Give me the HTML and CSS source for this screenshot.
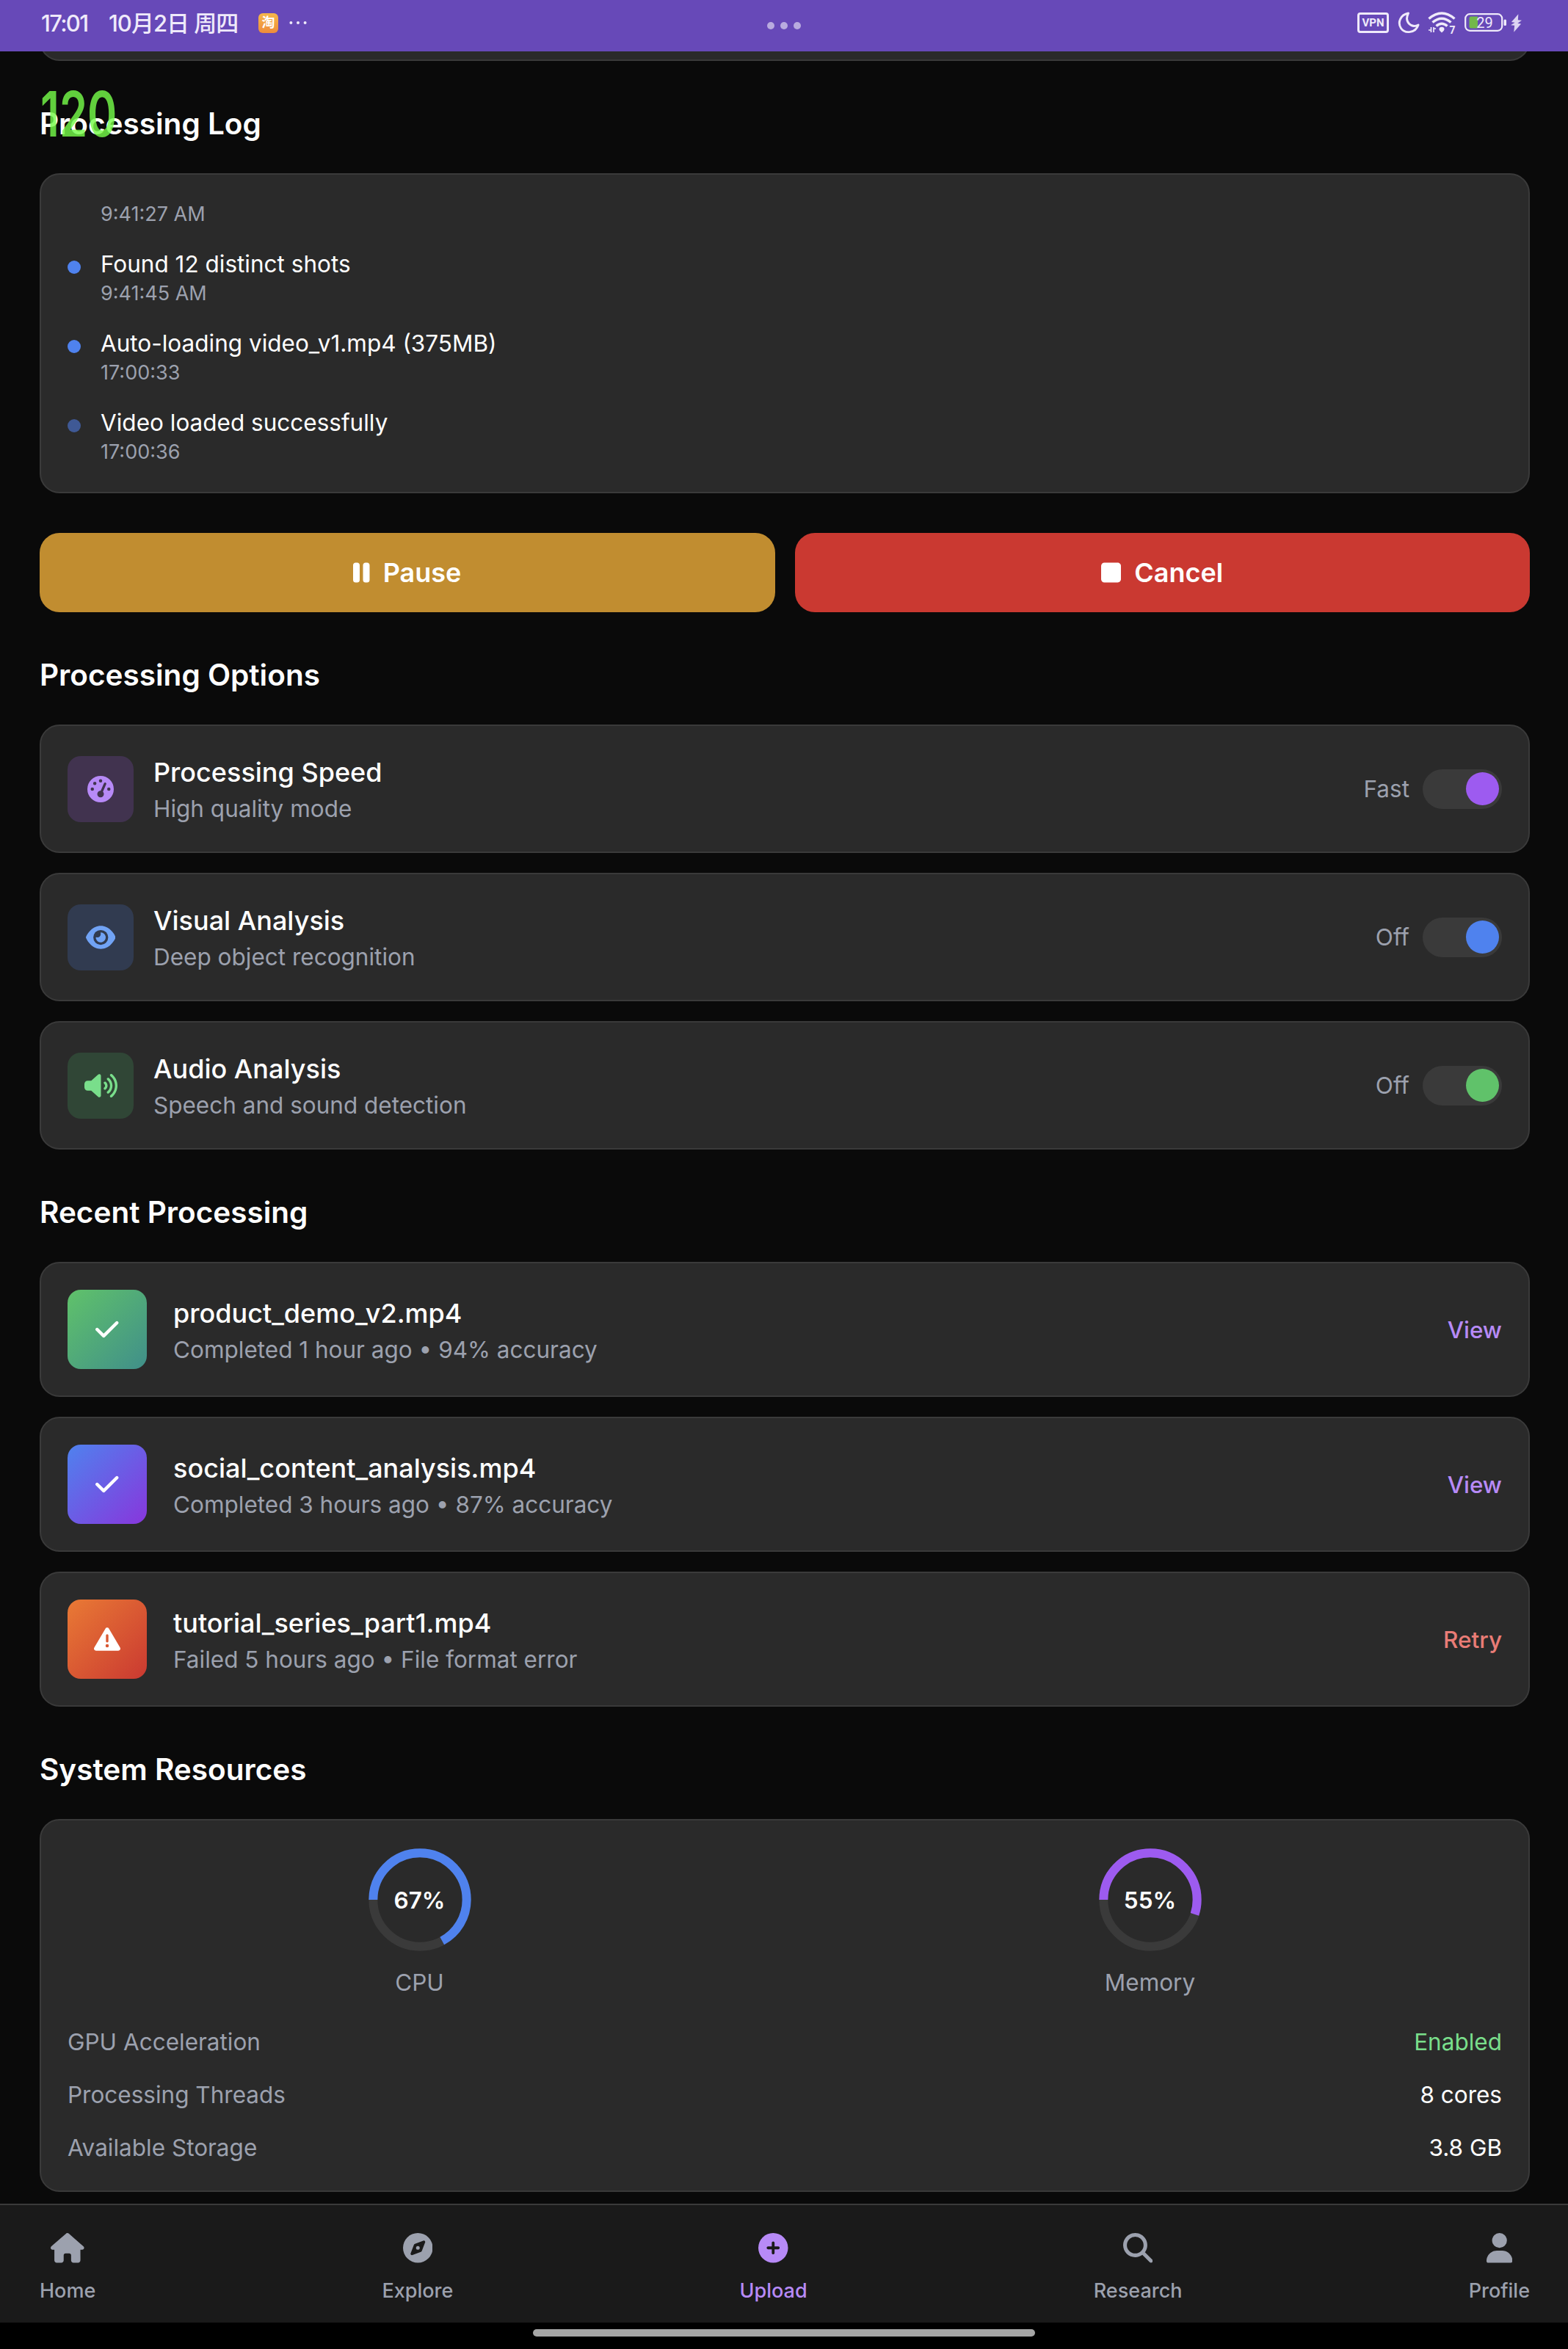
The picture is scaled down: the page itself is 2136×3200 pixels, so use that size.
FILE: index.html
```html
<!DOCTYPE html>
<html lang="en">
<head>
<meta charset="utf-8">
<title>Video Processing</title>
<link rel="stylesheet" href="styles.css">
</head>
<body>
<header class="status">
  <div class="status-left">
    <span class="time">17:01</span>
    <span class="date">10月2日 周四</span>
    <span class="app">淘</span>
    <svg class="more" viewBox="0 0 24 6"><circle cx="2.4" cy="3" r="2"/><circle cx="12" cy="3" r="2"/><circle cx="21.6" cy="3" r="2"/></svg>
  </div>
  <svg class="handle" viewBox="0 0 48 10"><circle cx="6" cy="5" r="5"/><circle cx="24" cy="5" r="5"/><circle cx="42" cy="5" r="5"/></svg>
  <div class="status-right">
    <span class="vpn">VPN</span>
    <svg class="moon" viewBox="0 0 30 30"><path d="M14.5 2C3.500 4-.5 15 4.500 22.500c5.500 8 20 6.500 23.500-4.500C18.500 22.500 8.500 14 14.500 2z" fill="none" stroke="#efeafa" stroke-width="2.900" stroke-linejoin="round"/></svg>
    <svg class="wifi" viewBox="0 0 38 30"><g fill="none" stroke="#efeafa" stroke-width="3.500"><path d="M1.500 9.500Q19-5.500 36.500 9.500"/><path d="M6.500 14.500Q19 4 31.500 14.500"/><path d="M11.500 19.500Q19 13 26.500 19.500"/></g><path d="M15.500 24a3.500 3.300 0 0 1 7 0q0 1.500-3.500 4.500-3.500-3-3.500-4.500z" fill="#efeafa"/><path d="M1 25h3.500v-4M4.500 21v7M8 28v-7M8 23h3" fill="none" stroke="#efeafa" stroke-width="1.700"/><text x="29.500" y="29.500" font-size="14">7</text></svg>
    <svg class="battery" viewBox="0 0 58 26"><rect x="1.200" y="1.200" width="50" height="22.600" rx="6" fill="none" stroke="#efeafa" stroke-width="2.200"/><path d="M9 4.500h9v16H9a2.500 2.500 0 0 1-2.500-2.500V7A2.500 2.500 0 0 1 9 4.500z" fill="#73b84b"/><rect x="53.500" y="8.500" width="3.500" height="8.500" rx="1.500" fill="#efeafa"/><text x="27.500" y="19.500" font-size="20" text-anchor="middle">29</text></svg>
    <svg class="bolt" viewBox="0 0 16 26"><path d="M11 0 1 11.500l5 .8L0 16l5.500.5L4.500 26 15 14l-5-.8L16 9l-5.500-.5z" fill="#ddd5f2"/></svg>
  </div>
</header>

<main class="content">
  <section class="card card-tail"></section>

  <section class="block">
    <h3 class="heading">Processing Log</h3>
    <div class="card log">
      <div class="entry"><span class="when indent">9:41:27 AM</span></div>
      <div class="entry"><i class="dot"></i><div><p class="what">Found 12 distinct shots</p><p class="when">9:41:45 AM</p></div></div>
      <div class="entry"><i class="dot"></i><div><p class="what">Auto-loading video_v1.mp4 (375MB)</p><p class="when">17:00:33</p></div></div>
      <div class="entry"><i class="dot dim"></i><div><p class="what">Video loaded successfully</p><p class="when">17:00:36</p></div></div>
    </div>
  </section>

  <section class="actions">
    <button class="btn pause"><svg viewBox="0 0 320 512" width="22.5" height="36"><path d="M48 64C21.500 64 0 85.500 0 112V400c0 26.500 21.500 48 48 48H80c26.500 0 48-21.500 48-48V112c0-26.500-21.500-48-48-48H48zm192 0c-26.500 0-48 21.500-48 48V400c0 26.500 21.500 48 48 48h32c26.500 0 48-21.500 48-48V112c0-26.500-21.500-48-48-48H240z"/></svg>Pause</button>
    <button class="btn cancel"><svg viewBox="0 0 384 512" width="27" height="36"><path d="M0 128C0 92.700 28.700 64 64 64H320c35.300 0 64 28.700 64 64V384c0 35.300-28.700 64-64 64H64c-35.300 0-64-28.700-64-64V128z"/></svg>Cancel</button>
  </section>

  <section class="block">
    <h3 class="heading">Processing Options</h3>
    <div class="stack">
      <div class="card row">
        <span class="tile purple"><svg viewBox="0 0 512 512" width="36" height="36"><path d="M0 256a256 256 0 1 1 512 0A256 256 0 1 1 0 256zM288 96a32 32 0 1 0-64 0 32 32 0 1 0 64 0zM256 416c35.300 0 64-28.700 64-64c0-17.400-6.900-33.100-18.100-44.600L366 161.700c5.300-12.100-.2-26.300-12.300-31.600s-26.300 .2-31.600 12.300L257.900 288c-.6 0-1.300 0-1.900 0c-35.300 0-64 28.700-64 64s28.700 64 64 64zM176 144a32 32 0 1 0-64 0 32 32 0 1 0 64 0zM96 288a32 32 0 1 0 0-64 32 32 0 1 0 0 64zm352-32a32 32 0 1 0-64 0 32 32 0 1 0 64 0z"/></svg></span>
        <div class="info"><p class="name">Processing Speed</p><p class="sub">High quality mode</p></div>
        <span class="state">Fast</span><span class="toggle"><i class="knob k-purple"></i></span>
      </div>
      <div class="card row">
        <span class="tile blue"><svg viewBox="0 0 576 512" width="40.5" height="36"><path d="M288 32c-80.800 0-145.500 36.800-192.600 80.600C48.600 156 17.300 208 2.500 243.700c-3.300 7.900-3.300 16.700 0 24.600C17.300 304 48.600 356 95.400 399.400C142.500 443.200 207.200 480 288 480s145.500-36.800 192.600-80.600c46.800-43.500 78.100-95.400 93-131.100c3.300-7.900 3.300-16.700 0-24.600c-14.900-35.700-46.200-87.700-93-131.100C433.500 68.800 368.800 32 288 32zM144 256a144 144 0 1 1 288 0 144 144 0 1 1-288 0zm144-64c0 35.300-28.700 64-64 64c-7.100 0-13.900-1.200-20.300-3.300c-5.500-1.800-11.900 1.600-11.700 7.400c.3 6.900 1.300 13.800 3.200 20.700c13.700 51.200 66.400 81.600 117.600 67.900s81.600-66.400 67.900-117.600c-11.100-41.500-47.800-69.400-88.600-71.100c-5.800-.2-9.200 6.100-7.400 11.700c2.100 6.400 3.300 13.200 3.300 20.300z"/></svg></span>
        <div class="info"><p class="name">Visual Analysis</p><p class="sub">Deep object recognition</p></div>
        <span class="state">Off</span><span class="toggle"><i class="knob k-blue"></i></span>
      </div>
      <div class="card row">
        <span class="tile green"><svg viewBox="0 0 640 512" width="45" height="36"><path d="M533.600 32.500C598.500 85.200 640 165.800 640 256s-41.500 170.700-106.400 223.500c-10.300 8.400-25.400 6.800-33.800-3.500s-6.800-25.400 3.500-33.800C557.500 398.200 592 331.200 592 256s-34.500-142.200-88.700-186.300c-10.300-8.400-11.800-23.500-3.500-33.800s23.500-11.800 33.800-3.500zM473.100 107c43.200 35.200 70.900 88.900 70.900 149s-27.700 113.800-70.900 149c-10.300 8.400-25.400 6.800-33.800-3.500s-6.800-25.400 3.500-33.800C475.300 341.300 496 301.100 496 256s-20.700-85.300-53.200-111.800c-10.300-8.400-11.800-23.500-3.500-33.800s23.500-11.800 33.800-3.500zm-60.500 74.500C434.100 199.100 448 225.900 448 256s-13.900 56.900-35.400 74.500c-10.300 8.400-25.400 6.800-33.800-3.500s-6.800-25.400 3.500-33.800C393.100 284.400 400 271 400 256s-6.900-28.400-17.700-37.300c-10.300-8.400-11.800-23.500-3.500-33.800s23.500-11.800 33.800-3.500zM301.100 34.800C312.600 40 320 51.400 320 64V448c0 12.600-7.400 24-18.900 29.200s-25 3.100-34.400-5.300L131.800 352H64c-35.300 0-64-28.700-64-64V224c0-35.300 28.700-64 64-64h67.800L266.700 40.100c9.400-8.400 22.900-10.400 34.400-5.300z"/></svg></span>
        <div class="info"><p class="name">Audio Analysis</p><p class="sub">Speech and sound detection</p></div>
        <span class="state">Off</span><span class="toggle"><i class="knob k-green"></i></span>
      </div>
    </div>
  </section>

  <section class="block">
    <h3 class="heading">Recent Processing</h3>
    <div class="stack">
      <div class="card row">
        <span class="thumb t-green"><svg viewBox="0 0 448 512" width="31.5" height="36"><path d="M438.600 105.400c12.500 12.500 12.500 32.800 0 45.300l-256 256c-12.500 12.500-32.800 12.500-45.300 0l-128-128c-12.500-12.500-12.500-32.800 0-45.300s32.800-12.500 45.300 0L160 338.700 393.400 105.400c12.500-12.500 32.800-12.500 45.300 0z"/></svg></span>
        <div class="info"><p class="name">product_demo_v2.mp4</p><p class="sub">Completed 1 hour ago • 94% accuracy</p></div>
        <span class="link">View</span>
      </div>
      <div class="card row">
        <span class="thumb t-blue"><svg viewBox="0 0 448 512" width="31.5" height="36"><path d="M438.600 105.400c12.500 12.500 12.500 32.800 0 45.300l-256 256c-12.500 12.500-32.800 12.500-45.300 0l-128-128c-12.500-12.500-12.500-32.800 0-45.300s32.800-12.500 45.300 0L160 338.700 393.400 105.400c12.500-12.500 32.800-12.500 45.300 0z"/></svg></span>
        <div class="info"><p class="name">social_content_analysis.mp4</p><p class="sub">Completed 3 hours ago • 87% accuracy</p></div>
        <span class="link">View</span>
      </div>
      <div class="card row">
        <span class="thumb t-red"><svg viewBox="0 0 512 512" width="36" height="36"><path d="M256 32c14.200 0 27.300 7.500 34.500 19.800l216 368c7.300 12.400 7.300 27.700 .2 40.100S486.300 480 472 480H40c-14.300 0-27.600-7.700-34.700-20.100s-7-27.800 .2-40.100l216-368C228.700 39.500 241.800 32 256 32zm0 128c-13.300 0-24 10.700-24 24V296c0 13.300 10.700 24 24 24s24-10.700 24-24V184c0-13.300-10.700-24-24-24zm32 224a32 32 0 1 0-64 0 32 32 0 1 0 64 0z"/></svg></span>
        <div class="info"><p class="name">tutorial_series_part1.mp4</p><p class="sub">Failed 5 hours ago • File format error</p></div>
        <span class="link retry">Retry</span>
      </div>
    </div>
  </section>

  <section class="block">
    <h3 class="heading">System Resources</h3>
    <div class="card resources">
      <div class="gauges">
        <div class="gauge">
          <div class="ring"><svg viewBox="0 0 36 36"><circle class="track" cx="18" cy="18" r="15.9155"/><circle class="arc a-blue" cx="18" cy="18" r="15.9155" stroke-dasharray="67 100"/></svg><span class="pct">67%</span></div>
          <span class="sub">CPU</span>
        </div>
        <div class="gauge">
          <div class="ring"><svg viewBox="0 0 36 36"><circle class="track" cx="18" cy="18" r="15.9155"/><circle class="arc a-purple" cx="18" cy="18" r="15.9155" stroke-dasharray="55 100"/></svg><span class="pct">55%</span></div>
          <span class="sub">Memory</span>
        </div>
      </div>
      <div class="stack">
        <div class="stat"><span class="sub">GPU Acceleration</span><span class="on">Enabled</span></div>
        <div class="stat"><span class="sub">Processing Threads</span><span>8 cores</span></div>
        <div class="stat"><span class="sub">Available Storage</span><span>3.8 GB</span></div>
      </div>
    </div>
  </section>
</main>

<nav class="nav">
  <a class="tab"><svg viewBox="0 0 576 512" width="45.600" height="40.500"><path d="M575.800 255.500c0 18-15 32.100-32 32.100h-32l.7 160.200c0 2.700-.2 5.400-.5 8.100V472c0 22.100-17.900 40-40 40H456c-1.100 0-2.200 0-3.300-.1c-1.400 .1-2.800 .1-4.200 .1H416 392c-22.100 0-40-17.900-40-40V448 384c0-17.700-14.300-32-32-32H256c-17.700 0-32 14.300-32 32v64 24c0 22.100-17.900 40-40 40H160 128.100c-1.500 0-3-.1-4.500-.2c-1.200 .1-2.400 .2-3.600 .2H104c-22.100 0-40-17.900-40-40V360c0-.9 0-1.900 .1-2.800V287.600H32c-18 0-32-14-32-32.100c0-9 3-17 10-24L266.400 8c7-7 15-8 22-8s15 2 21 7L564.800 231.500c8 7 12 15 11 24z"/></svg><span>Home</span></a>
  <a class="tab"><svg viewBox="0 0 512 512" width="40.500" height="40.500"><path d="M256 512A256 256 0 1 0 256 0a256 256 0 1 0 0 512zm50.700-186.900L162.400 380.600c-19.400 7.500-38.500-11.600-31-31l55.500-144.300c3.300-8.500 9.900-15.100 18.400-18.400l144.300-55.500c19.400-7.500 38.500 11.600 31 31L325.100 306.700c-3.200 8.500-9.900 15.100-18.400 18.400zM288 256a32 32 0 1 0-64 0 32 32 0 1 0 64 0z"/></svg><span>Explore</span></a>
  <a class="tab active"><svg viewBox="0 0 512 512" width="40.500" height="40.500"><path d="M256 512A256 256 0 1 0 256 0a256 256 0 1 0 0 512zM232 344V280H168c-13.300 0-24-10.700-24-24s10.700-24 24-24h64V168c0-13.300 10.700-24 24-24s24 10.700 24 24v64h64c13.300 0 24 10.700 24 24s-10.700 24-24 24H280v64c0 13.300-10.700 24-24 24s-24-10.700-24-24z"/></svg><span>Upload</span></a>
  <a class="tab"><svg viewBox="0 0 512 512" width="40.500" height="40.500"><path d="M416 208c0 45.900-14.900 88.300-40 122.700L502.600 457.400c12.500 12.500 12.500 32.800 0 45.300s-32.800 12.500-45.300 0L330.700 376c-34.400 25.200-76.800 40-122.700 40C93.100 416 0 322.900 0 208S93.100 0 208 0S416 93.100 416 208zM208 352a144 144 0 1 0 0-288 144 144 0 1 0 0 288z"/></svg><span>Research</span></a>
  <a class="tab"><svg viewBox="0 0 448 512" width="35.400" height="40.500"><path d="M224 256A128 128 0 1 0 224 0a128 128 0 1 0 0 256zm-45.700 48C79.800 304 0 383.800 0 482.300C0 498.700 13.300 512 29.700 512H418.300c16.400 0 29.700-13.300 29.700-29.700C448 383.800 368.200 304 269.700 304H178.300z"/></svg><span>Profile</span></a>
</nav>
<footer class="home-bar"><i></i></footer>
<div class="fps">120</div>
</body>
</html>
```
FILE: styles.css
```css
* { box-sizing: border-box; margin: 0; padding: 0; }
html, body { width: 2136px; height: 3200px; overflow: hidden; }
body {
  position: relative;
  display: flex;
  flex-direction: column;
  background: #0a0a0a;
  color: #fff;
  font-family: Inter, "Noto Sans CJK SC", sans-serif;
  font-size: 31.5px;
  line-height: 45px;
}
svg { display: block; fill: currentColor; flex: none; }

/* system status bar */
.status {
  flex: none;
  height: 70px;
  display: grid;
  grid-template-columns: 1fr 48px 1fr;
  background: #6749b8;
  color: #efeafa;
}
.status-left, .status-right { display: flex; align-items: center; height: 62px; }
.status-left { padding-left: 56px; font-size: 31px; font-weight: 500; letter-spacing: -1px; }
.time { width: 92px; letter-spacing: -1.7px; }
.date { width: 204px; white-space: nowrap; }
.app {
  width: 27px; height: 36px; border-radius: 6px;
  background: linear-gradient(#f5b74a, #ee8c3c);
  color: #fff; font-size: 18px; line-height: 26px; text-align: center; font-weight: 700;
  height: 27px; letter-spacing: 0;
}
.more { width: 24px; height: 6px; margin-left: 15px; }
.handle { width: 48px; height: 10px; margin-top: 30px; fill: #b9abdf; }
.status-right { justify-content: flex-end; padding-right: 63px; }
.vpn {
  width: 43px; height: 28px; border: 3px solid #efeafa; border-radius: 4px;
  font: 700 15px/22px Roboto, sans-serif; text-align: center;
}
.moon { width: 30px; height: 30px; margin-left: 12px; }
.wifi { width: 38px; height: 30px; margin-left: 11px; overflow: visible; font-family: Roboto, sans-serif; font-weight: 700; }
.battery { width: 58px; height: 26px; margin-left: 12px; font-family: Roboto, sans-serif; }
.bolt { width: 15px; height: 25px; margin-left: 5px; }

/* scrolled content */
.content {
  height: 2932px;
  flex: none;
  overflow: hidden;
  padding: 0 52px 0 54px;
  display: flex;
  flex-direction: column;
  gap: 54px;
}
.content > * { flex: none; }
.card {
  background: #2a2a2a;
  border: 2px solid #3a3a3a;
  border-radius: 27px;
  padding: 36px;
}
.card-tail { height: 80px; margin-top: -67px; }
.heading { font-size: 40.5px; line-height: 63px; font-weight: 600; margin-bottom: 36px; }
.stack { display: flex; flex-direction: column; gap: 27px; }

.log { height: 436px; display: flex; flex-direction: column; gap: 27px; overflow: hidden; }
.entry { display: flex; gap: 27px; }
.indent { padding-left: 45px; }
.dot { width: 18px; height: 18px; margin-top: 18px; border-radius: 50%; background: #4f82ee; }
.dim { background: #3f5995; }
.when { font-size: 27px; line-height: 36px; color: #9ca1ae; }

.actions { display: grid; grid-template-columns: 1fr 1fr; gap: 27px; }
.btn {
  height: 108px; border: 0; border-radius: 27px;
  display: flex; align-items: center; justify-content: center; gap: 18px;
  color: #fff; font: 600 36px/54px Inter, sans-serif;
}
.pause { background: #c18d30; }
.cancel { background: #ca3931; }

.row { display: flex; align-items: center; }
.info { flex: 1; }
.name { font-size: 36px; line-height: 54px; font-weight: 500; }
.sub, .state { color: #9ca1ae; }
.tile {
  width: 90px; height: 90px; margin-right: 27px; border-radius: 18px;
  display: flex; align-items: center; justify-content: center;
}
.purple { background: #41334f; color: #b78af7; }
.blue { background: #313b50; color: #71a3f5; }
.green { background: #304636; color: #79de8b; }
.toggle {
  width: 108px; height: 54px; margin-left: 18px; padding: 4.5px; border-radius: 27px;
  background: #3a3a3a; display: flex; justify-content: flex-end;
}
.knob { width: 45px; height: 45px; border-radius: 50%; }
.k-purple { background: #9d5bf0; }
.k-blue { background: #4f82ee; }
.k-green { background: #60c26a; }

.thumb {
  width: 108px; height: 108px; margin-right: 36px; border-radius: 18px;
  display: flex; align-items: center; justify-content: center;
}
.t-green { background: linear-gradient(135deg, #60c26a, #408f8a); }
.t-blue { background: linear-gradient(135deg, #4f82ee, #8836dc); }
.t-red { background: linear-gradient(135deg, #e97a35, #ca3931); }
.link { color: #b78af7; font-weight: 500; }
.retry { color: #e97c76; }

.gauges { display: grid; grid-template-columns: 1fr 1fr; gap: 36px; margin-bottom: 36px; }
.gauge { display: flex; flex-direction: column; align-items: center; gap: 18px; }
.ring { display: grid; width: 144px; height: 144px; }
.ring > * { grid-area: 1 / 1; }
.ring svg { transform: rotate(180deg); fill: none; stroke-width: 3; }
.track { stroke: #3a3a3a; }
.a-blue { stroke: #4f82ee; }
.a-purple { stroke: #9d5bf0; }
.pct { place-self: center; font-weight: 600; }
.stat { display: flex; justify-content: space-between; }
.on { color: #79de8b; }

/* bottom navigation */
.nav {
  flex: none;
  height: 162px;
  display: flex;
  justify-content: space-between;
  align-items: flex-start;
  padding: 38px 52px 0 54px;
  background: #1a1a1a;
  border-top: 2px solid #3a3a3a;
  color: #9ca1ae;
}
.tab { display: flex; flex-direction: column; align-items: center; gap: 20px; font-size: 27px; line-height: 36px; font-weight: 500; }
.active { color: #b78af7; }
.home-bar { flex: none; height: 36px; background: #000; display: flex; justify-content: center; padding-top: 9px; }
.home-bar i { width: 684px; height: 10px; border-radius: 5px; background: #a6a6a6; }

/* frame-rate overlay */
.fps {
  position: absolute; left: 55px; top: 108px;
  font: 600 85px/96px Inter, sans-serif;
  transform: scaleX(.72);
  transform-origin: left;
  color: rgba(117, 251, 73, .82);
}
```
